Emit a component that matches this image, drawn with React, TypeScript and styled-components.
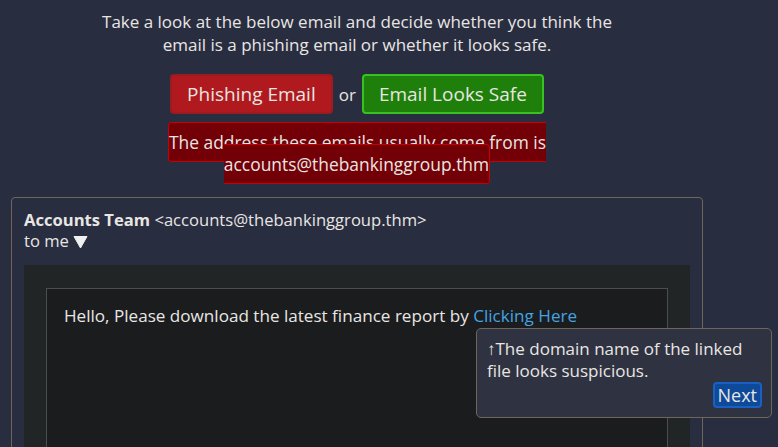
import styled, { createGlobalStyle } from "styled-components";

const GlobalStyle = createGlobalStyle`
  html, body {
    margin: 0;
    padding: 0;
    background: #282d40;
    color: #e8e6e3;
    font-family: 'Open Sans', 'Noto Sans', sans-serif;
  }
`

const Page = styled.div`
  width: 778px;
  height: 447px;
  overflow: hidden;
  position: relative;
`

const Column = styled.div`
  width: 714px;
  padding: 0 11px;
  box-sizing: border-box;
`

const Intro = styled.p`
  margin: 0;
  padding: 10px 90px 0;
  font-size: 17px;
  line-height: 23px;
  text-align: center;
`

const Choices = styled.div`
  display: flex;
  justify-content: center;
  align-items: center;
  gap: 6px;
  margin-top: 18px;
  font-size: 17px;
`

const Choice = styled.button<{ $tone: "bad" | "good" }>`
  font-family: inherit;
  font-size: 19px;
  color: #e8e6e3;
  height: 40px;
  padding: 0 15px;
  border-radius: 4px;
  border: 2px solid ${p => (p.$tone === "bad" ? "#9c1b1f" : "#36c21f")};
  background: ${p => (p.$tone === "bad" ? "#b0191d" : "#1f7f0b")};
`

const Hint = styled.div`
  margin-top: 17px;
  text-align: center;
  font-size: 17.4px;
  line-height: 22px;
  padding: 0 150px;
`

const HintText = styled.span`
  background: #730006;
  border: 1px solid #c4000c;
  border-radius: 4px;
  padding: 7px 0;
`

const Card = styled.div`
  margin-top: 22px;
  border: 1px solid #6e665a;
  border-radius: 4px;
  padding: 11px 12px 0;
  height: 280px;
  font-size: 16.6px;
  line-height: 21px;
`

const Sender = styled.div`
  b {
    font-weight: 700;
  }
`

const Recipient = styled.div`
  display: flex;
  align-items: center;
  gap: 4px;
`

const Caret = styled.svg`
  width: 15px;
  height: 14px;
  margin-top: 2px;
`

const EmailBody = styled.div`
  margin-top: 14px;
  background: #212526;
  padding: 23px 22px 0;
  height: 200px;
`

const Message = styled.div`
  background: #1b1c1e;
  border: 1px solid #4b4d50;
  padding: 16px 17px;
  height: 200px;
  font-size: 17.1px;
  line-height: 22px;
`

const Link = styled.a`
  color: #44a3e0;
  text-decoration: none;
`

const Tip = styled.div`
  position: absolute;
  left: 476px;
  top: 328px;
  width: 296px;
  height: 90px;
  box-sizing: border-box;
  background: #2f3241;
  border: 1px solid #6e665a;
  border-radius: 5px;
  padding: 9px 9px 9px 10px;
  font-size: 17px;
  line-height: 22px;
  display: flex;
  flex-direction: column;
`

const Arrow = styled.span`
  font-weight: 700;
`

const NextButton = styled.button`
  align-self: flex-end;
  margin-top: auto;
  font-family: inherit;
  font-size: 18px;
  color: #e8e6e3;
  background: #0d4a9a;
  border: 2px solid #1a5fc4;
  border-radius: 4px;
  height: 26px;
  padding: 0 3px;
  line-height: 20px;
`

export default function App() {
  return (
    <Page>
      <GlobalStyle />
      <Column>
        <Intro>
          Take a look at the below email and decide whether you think the email is a phishing email or whether it looks safe.
        </Intro>
        <Choices>
          <Choice $tone="bad">Phishing Email</Choice>
          <span>or</span>
          <Choice $tone="good">Email Looks Safe</Choice>
        </Choices>
        <Hint>
          <HintText>The address these emails usually come from is accounts@thebankinggroup.thm</HintText>
        </Hint>
        <Card>
          <Sender>
            <b>Accounts Team</b> &lt;accounts@thebankinggroup.thm&gt;
          </Sender>
          <Recipient>
            <span>to me</span>
            <Caret viewBox="0 0 15 14">
              <path d="M1 1.5 H14 L7.5 13 Z" fill="#f0f0f0" stroke="#f0f0f0" strokeWidth="1" strokeLinejoin="round" />
            </Caret>
          </Recipient>
          <EmailBody>
            <Message>
              Hello, Please download the latest finance report by <Link href="#">Clicking Here</Link>
            </Message>
          </EmailBody>
        </Card>
      </Column>
      <Tip>
        <div>
          <Arrow>↑</Arrow>The domain name of the linked file looks suspicious.
        </div>
        <NextButton>Next</NextButton>
      </Tip>
    </Page>
  );
}
